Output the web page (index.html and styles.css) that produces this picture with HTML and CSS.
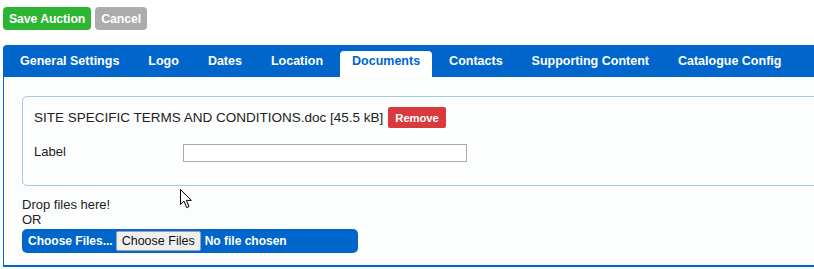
FILE: index.html
```html
<!DOCTYPE html>
<html lang="en">
<head>
    <meta charset="UTF-8">
    <title>Edit Auction</title>
    <link rel="stylesheet" href="styles.css">
</head>
<body>
    <div class="actions">
        <button class="btn btn-save">Save Auction</button>
        <button class="btn btn-cancel">Cancel</button>
    </div>

    <div class="editor">
        <ul class="tabs">
            <li>General Settings</li>
            <li>Logo</li>
            <li>Dates</li>
            <li>Location</li>
            <li class="active">Documents</li>
            <li>Contacts</li>
            <li>Supporting Content</li>
            <li>Catalogue Config</li>
        </ul>

        <div class="tab-body">
            <div class="doc-panel">
                <div class="doc-name">
                    SITE SPECIFIC TERMS AND CONDITIONS.doc [45.5 kB]
                    <button class="btn btn-remove">Remove</button>
                </div>
                <div class="field">
                    <label for="docLabel">Label</label>
                    <input type="text" id="docLabel">
                </div>
            </div>

            <div class="drop-zone">
                Drop files here!<br>
                OR
            </div>
            <div class="upload">
                <span>Choose Files...</span>
                <input type="file" multiple>
            </div>
        </div>
    </div>

    <svg class="cursor" width="13" height="20" viewBox="0 0 13 20">
        <path d="M0.5 0.5 L0.5 15.5 L4 12.2 L6.7 18.6 L9 17.6 L6.4 11.4 L11.3 11.4 Z" fill="#fff" stroke="#000" stroke-width="1"/>
    </svg>
</body>
</html>
```

FILE: styles.css
```css
body {
    font-family: "Liberation Sans", Arial, sans-serif;
    font-size: 13px;
    color: #222;
    margin: 0;
    padding: 7px 0 0 3px;
    background: #fff;
    overflow: hidden;
}

.actions {
    display: flex;
    gap: 4px;
}

.btn {
    font-family: inherit;
    font-size: 12.3px;
    font-weight: bold;
    letter-spacing: -0.1px;
    color: #fff;
    border: none;
    border-radius: 4px;
    padding: 0 6px;
    height: 23px;
    cursor: pointer;
}

.btn-save {
    background: #2cb433;
}

.btn-cancel {
    background: #acacac;
}

.editor {
    width: 900px;
    margin-top: 15px;
}

.tabs {
    list-style: none;
    margin: 0;
    padding: 6px 0 0 5px;
    height: 26px;
    display: flex;
    gap: 5px;
    background: #0066cc;
    border-radius: 4px 4px 0 0;
    font-size: 12.5px;
}

.tabs li {
    padding: 2px 12px 0;
    color: #fff;
    font-weight: bold;
    line-height: 16px;
    border-radius: 4px 4px 0 0;
}

.tabs li.active {
    background: #fff;
    color: #0066cc;
}

.tab-body {
    background: #fcfdfd;
    border-left: 1px solid #0066cc;
    border-bottom: 2px solid #0066cc;
    padding: 19px 18px 12px;
}

.doc-panel {
    border: 1px solid #a9cbe8;
    border-radius: 5px;
    padding: 10px 11px 23px;
}

.doc-name {
    display: flex;
    align-items: center;
    gap: 5px;
    font-size: 13.5px;
}

.btn-remove {
    background: #d93a3e;
    height: 21px;
    font-size: 11.3px;
    padding: 0 7px;
    border-radius: 2px;
}

.field {
    display: flex;
    align-items: center;
    margin-top: 16px;
}

.field label {
    width: 149px;
    margin-top: -3px;
}

.field input {
    width: 278px;
    height: 14px;
    border: 1px solid #aaa;
    padding: 1px 2px;
    margin: 0;
}

.drop-zone {
    margin-top: 11px;
    line-height: 15px;
}

.upload {
    display: flex;
    align-items: center;
    width: 336px;
    height: 24px;
    box-sizing: border-box;
    padding-left: 6px;
    margin-top: 2px;
    background: #0066cc;
    border-radius: 5px;
    color: #fff;
    font-weight: bold;
    font-size: 12px;
    white-space: nowrap;
}

.upload span {
    flex-shrink: 0;
    margin-right: 3px;
}

.upload input {
    font-family: inherit;
    font-size: 12px;
    font-weight: bold;
    color: #fff;
    margin: 0;
}

.upload input::file-selector-button {
    font-family: inherit;
    font-size: 12.5px;
    font-weight: normal;
    color: #111;
    background: #efefef;
    border: 1px solid #a0a0a0;
    border-radius: 2px;
    height: 20px;
    padding: 0 5px;
    margin-right: 4px;
}

.cursor {
    position: absolute;
    left: 180px;
    top: 189px;
}
```
